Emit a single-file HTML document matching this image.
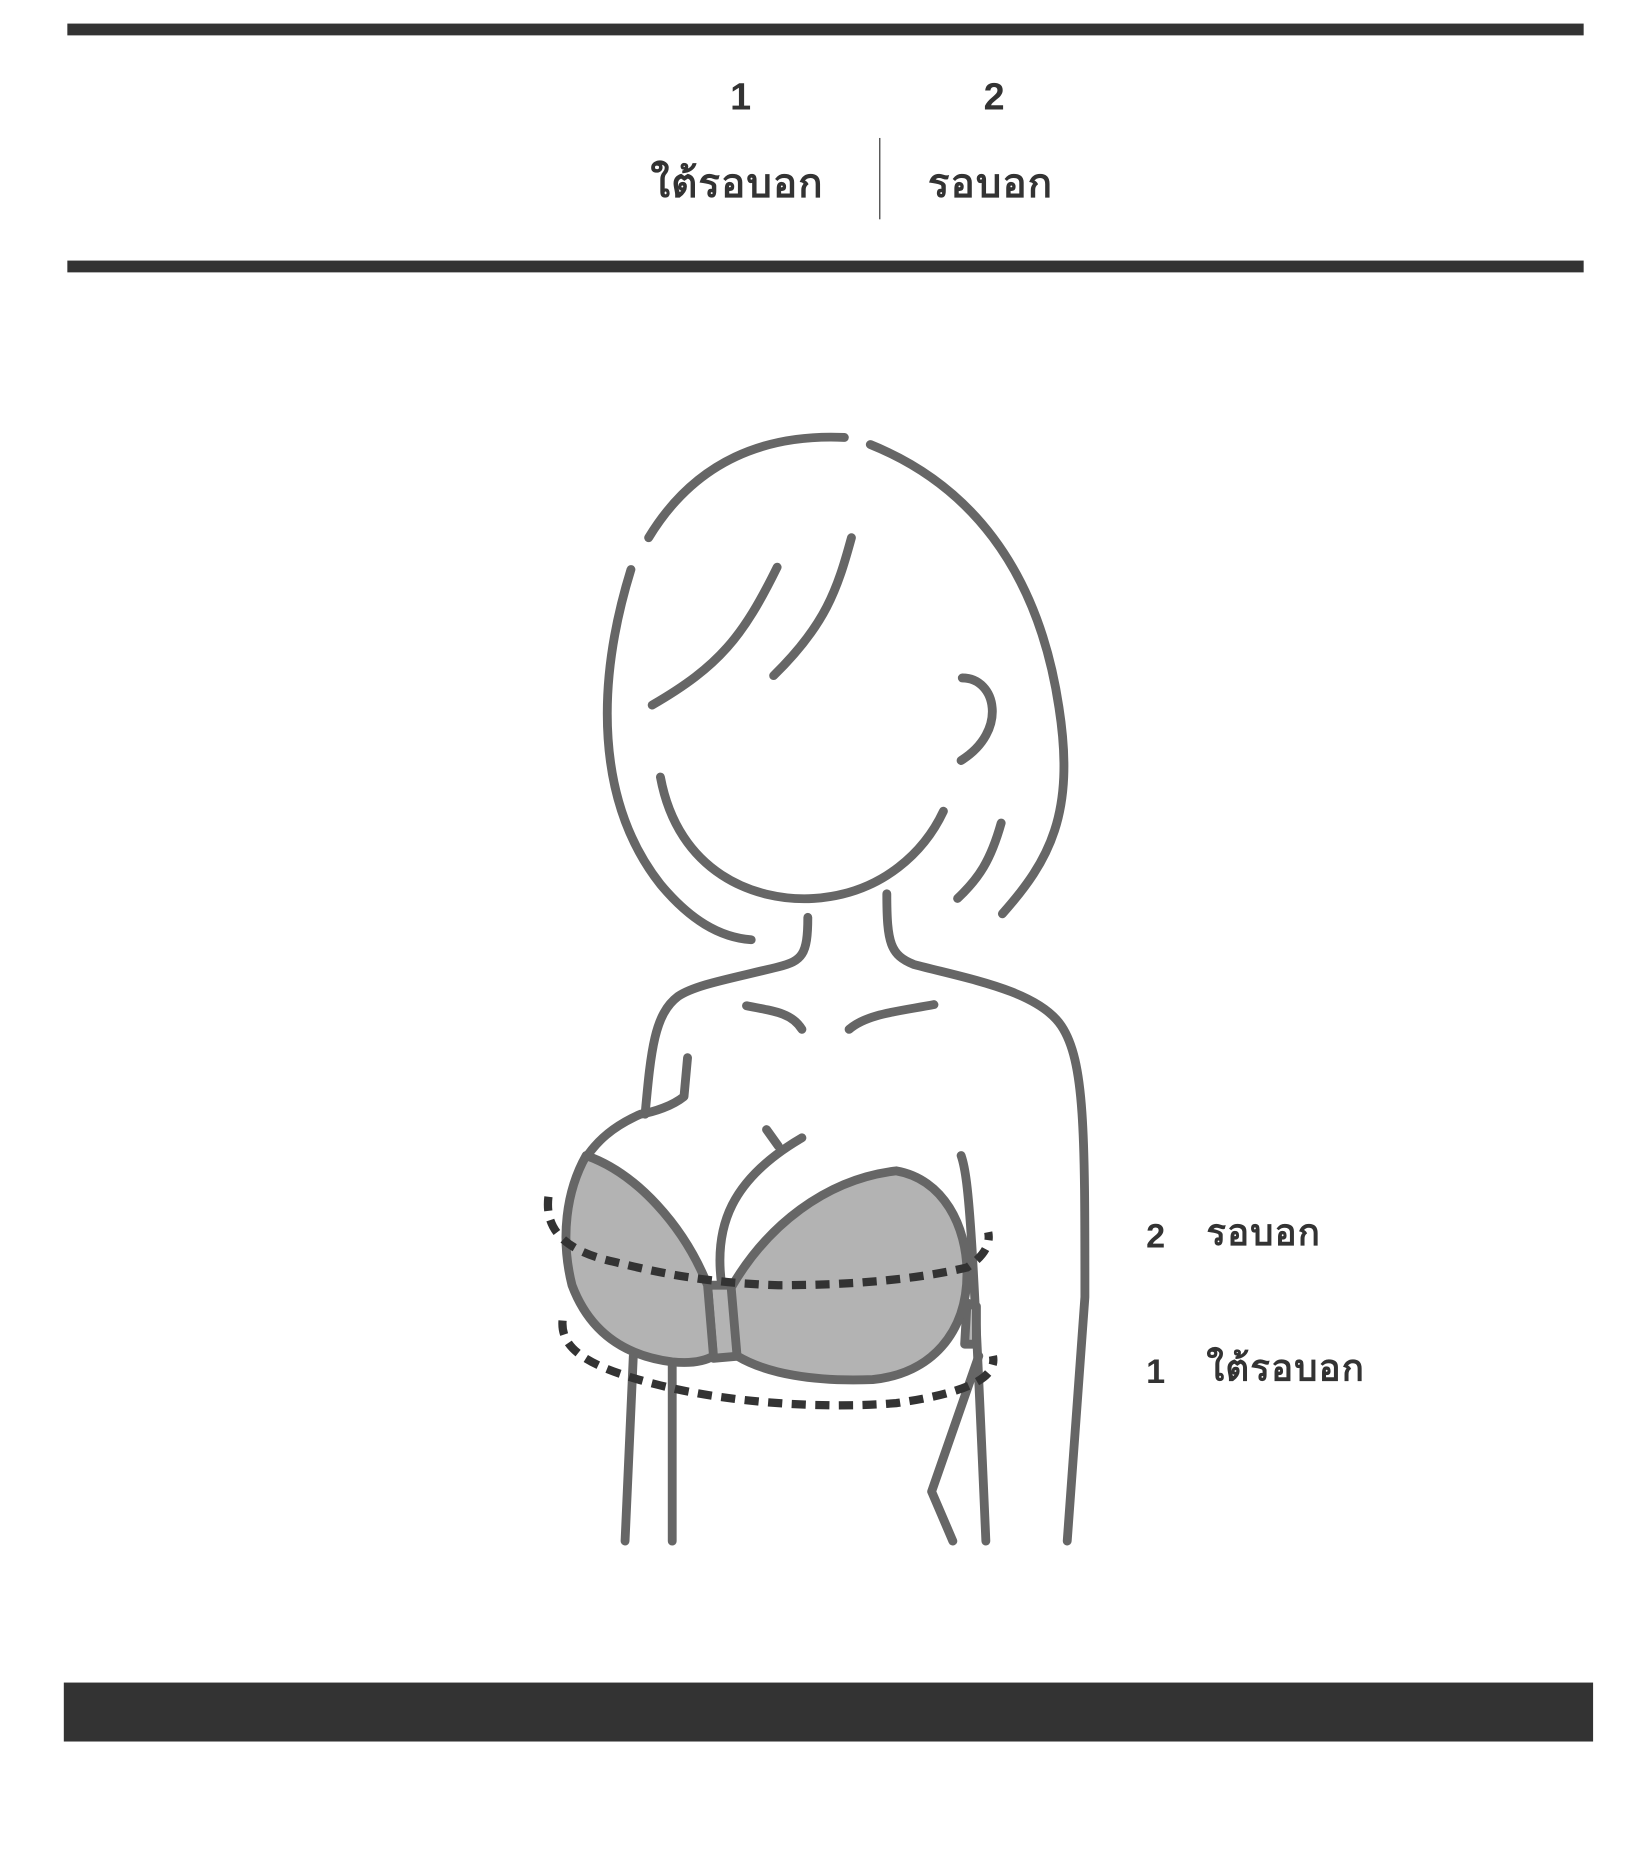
<!DOCTYPE html>
<html><head><meta charset="utf-8"><style>
html,body{margin:0;padding:0;background:#fff;}
svg{display:block;}
text{font-family:"Liberation Sans","DejaVu Sans",sans-serif;fill:#333;font-weight:bold;}
</style></head><body>
<svg width="1651" height="1850" viewBox="0 0 1400 1569" xmlns="http://www.w3.org/2000/svg">
<rect x="57" y="20" width="1286" height="10" fill="#333"/>
<rect x="57" y="221" width="1286" height="10" fill="#333"/>
<rect x="54" y="1427" width="1297" height="50" fill="#333"/>
<line x1="746" y1="117" x2="746" y2="186" stroke="#555" stroke-width="1.2"/>
<text x="628" y="93" font-size="32" text-anchor="middle" font-weight="normal">1</text>
<text x="843" y="93" font-size="32" text-anchor="middle" font-weight="normal">2</text>
<text x="625" y="167" font-size="34" text-anchor="middle" letter-spacing="1">ใต้รอบอก</text>
<text x="840" y="167" font-size="34" text-anchor="middle" letter-spacing="1">รอบอก</text>

<g fill="none" stroke="#666" stroke-width="7.5" stroke-linecap="round" stroke-linejoin="round">
<path d="M550,456 C590,390 650,368 716,371"/>
<path d="M738,377 C820,410 880,480 898,600 C912,690 890,730 850,775"/>
<path d="M535,483 C505,580 505,680 560,750 C585,780 610,795 637,797"/>
<path d="M553,598 C610,565 630,540 659,481"/>
<path d="M656,573 C700,530 710,500 722,456"/>
<path d="M816,575 C845,575 855,620 815,645"/>
<path d="M560,659 C575,740 640,765 690,762 C750,758 785,720 800,688"/>
<path d="M849,698 C840,730 830,745 812,762"/>
<path d="M685,778 C685,810 680,815 660,820 C620,830 590,835 575,845 C555,860 552,890 547,945"/>
<path d="M752,758 C752,800 755,810 775,818 C820,830 880,840 900,870 C920,900 920,960 920,1100 L905,1307"/>
<path d="M633,853 C660,858 672,860 680,873"/>
<path d="M720,873 C735,860 760,858 792,852"/>
<path d="M583,897 L580,930 C570,938 555,943 543,945 C520,955 505,968 495,985"/>
<path d="M537,1150 L530,1307"/>
<path d="M570,1152 L570,1307"/>
<path d="M815,980 C822,1000 825,1050 836,1307"/>
<path d="M830,1150 L790,1265 L808,1307"/>
<path d="M612,1090 C605,1040 620,1000 680,965"/>
<path d="M650,958 L660,972"/>
</g>
<g fill="#b3b3b3" stroke="#666" stroke-width="7.5" stroke-linejoin="round">
<path d="M820,1105 L828,1108 L828,1140 L818,1140 Z"/>
<path d="M600,1090 L625,1090 L628,1150 L605,1152 Z"/>
<path d="M497,980 C480,1010 475,1050 485,1090 C500,1130 530,1150 570,1155 C590,1157 600,1153 605,1150 L600,1090 C580,1040 540,995 497,980 Z"/>
<path d="M620,1092 C650,1040 700,1000 760,993 C800,1000 820,1040 820,1080 C820,1130 790,1165 740,1170 C690,1172 650,1165 625,1150 Z"/>
</g>
<g fill="none" stroke="#333" stroke-width="7" stroke-dasharray="12,8">
<path d="M465,1015 C462,1040 475,1060 520,1070 C560,1080 600,1088 660,1090 C740,1090 790,1082 820,1075 C835,1065 840,1055 838,1045"/>
<path d="M477,1120 C475,1145 500,1160 560,1175 C620,1190 700,1195 760,1190 C830,1180 845,1165 842,1150"/>
</g>
<text x="980" y="1058" font-size="29" text-anchor="middle" font-weight="normal">2</text>
<text x="1023" y="1056" font-size="31" letter-spacing="1">รอบอก</text>
<text x="980" y="1173" font-size="29" text-anchor="middle" font-weight="normal">1</text>
<text x="1023" y="1171" font-size="31" letter-spacing="1">ใต้รอบอก</text>
</svg>
</body></html>
